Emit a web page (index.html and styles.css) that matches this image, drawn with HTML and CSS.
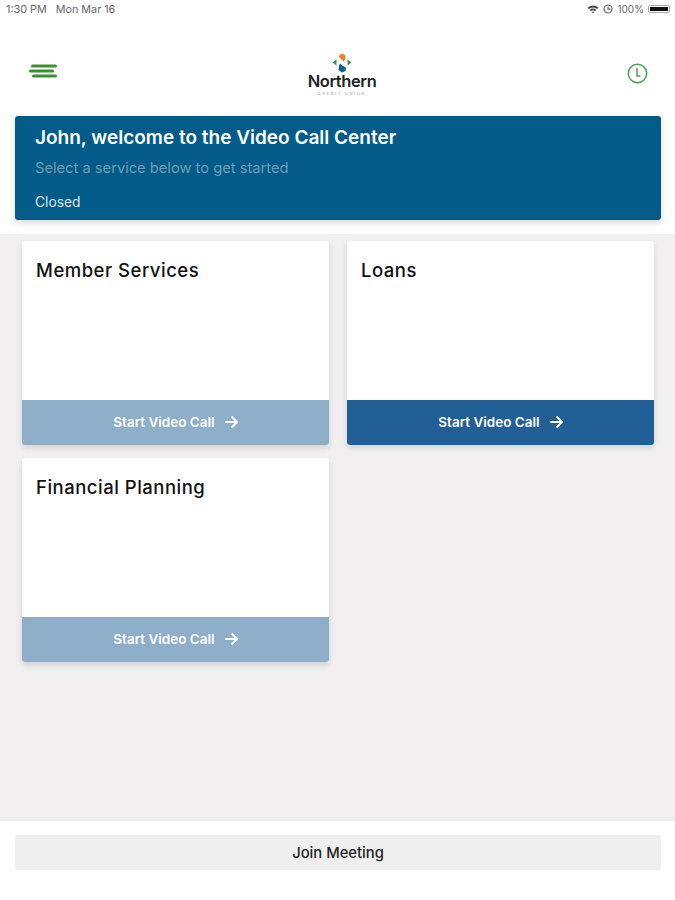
FILE: index.html
```html
<!DOCTYPE html>
<html lang="en">
<head>
    <meta charset="UTF-8">
    <meta name="viewport" content="width=device-width, initial-scale=1.0">
    <title>Video Call Center</title>
    <link rel="stylesheet" href="styles.css">
</head>
<body>
    <!-- Status bar -->
    <div class="status-bar">
        <div class="status-left">
            <span>1:30 PM</span>
            <span>Mon Mar 16</span>
        </div>
        <div class="status-right">
            <svg class="status-icon" width="12" height="9" viewBox="0 0 12 9">
                <path d="M0.5 2.8 A8 8 0 0 1 11.5 2.8 L10.2 4.1 A6.2 6.2 0 0 0 1.8 4.1 Z" fill="#444"/>
                <path d="M2.7 5 A4.6 4.6 0 0 1 9.3 5 L8.1 6.2 A3 3 0 0 0 3.9 6.2 Z" fill="#444"/>
                <path d="M4.8 7 A1.8 1.8 0 0 1 7.2 7 L6 8.6 Z" fill="#444"/>
            </svg>
            <svg class="status-icon" width="10" height="10" viewBox="0 0 10 10">
                <circle cx="5" cy="5" r="4" fill="none" stroke="#666" stroke-width="1.2"/>
                <path d="M5 2.6 V5.2 H7.4" fill="none" stroke="#666" stroke-width="1.2"/>
            </svg>
            <span>100%</span>
            <span class="battery"><span class="battery-fill"></span></span>
        </div>
    </div>

    <!-- Header with menu, logo and history -->
    <header class="top-header">
        <svg class="menu-icon" width="28" height="14" viewBox="0 0 28 14">
            <rect x="2" y="0.5" width="26" height="3" rx="1.5" fill="#3c8f33"/>
            <rect x="0" y="5.5" width="25" height="3" rx="1.5" fill="#3c8f33"/>
            <rect x="3" y="10.5" width="25" height="3" rx="1.5" fill="#3c8f33"/>
        </svg>
        <div class="logo">
            <svg width="20" height="20" viewBox="0 0 20 20">
                <path d="M6.5 3 L10 0.5 L13.5 2.5 L13.5 6 L11.5 8.5 L7.5 4.5 Z" fill="#ee7d31"/>
                <path d="M8 10.5 L11 13 L14 14.5 L13.5 18 L10 19.5 L6.5 17 L7 13 Z" fill="#0f5f8f"/>
                <path d="M0.5 9.5 L4.5 6.5 V12.5 Z" fill="#3c8f4a"/>
                <path d="M19.5 9.5 L15.5 6.5 V12.5 Z" fill="#3c8f4a"/>
            </svg>
            <div class="logo-name">Northern</div>
            <div class="logo-sub">CREDIT UNION</div>
        </div>
        <svg class="clock-icon" width="21" height="21" viewBox="0 0 21 21">
            <circle cx="10.5" cy="10.5" r="9.2" fill="none" stroke="#4c9a52" stroke-width="1.5"/>
            <path d="M10 5 V13 H13.5" fill="none" stroke="#4c9a52" stroke-width="1.5"/>
        </svg>
    </header>

    <!-- Welcome banner -->
    <section class="banner">
        <h1>John, welcome to the Video Call Center</h1>
        <p class="banner-sub">Select a service below to get started</p>
        <p class="banner-status">Closed</p>
    </section>

    <!-- Service cards -->
    <main class="services">
        <div class="card">
            <h2>Member Services</h2>
            <a class="call-btn disabled">Start Video Call
                <svg width="14" height="14" viewBox="0 0 14 14"><path d="M1 7 H12.5 M7.5 1.5 L13 7 L7.5 12.5" fill="none" stroke="#fff" stroke-width="2"/></svg>
            </a>
        </div>
        <div class="card">
            <h2>Loans</h2>
            <a class="call-btn">Start Video Call
                <svg width="14" height="14" viewBox="0 0 14 14"><path d="M1 7 H12.5 M7.5 1.5 L13 7 L7.5 12.5" fill="none" stroke="#fff" stroke-width="2"/></svg>
            </a>
        </div>
        <div class="card">
            <h2>Financial Planning</h2>
            <a class="call-btn disabled">Start Video Call
                <svg width="14" height="14" viewBox="0 0 14 14"><path d="M1 7 H12.5 M7.5 1.5 L13 7 L7.5 12.5" fill="none" stroke="#fff" stroke-width="2"/></svg>
            </a>
        </div>
    </main>

    <!-- Join meeting -->
    <footer class="bottom-bar">
        <button class="join-btn">Join Meeting</button>
    </footer>
</body>
</html>
```

FILE: styles.css
```css
* {
    box-sizing: border-box;
}

html, body {
    height: 100%;
}

body {
    margin: 0;
    display: flex;
    flex-direction: column;
    height: 900px;
    overflow: hidden;
    background-color: #fff;
    font-family: Inter, "Liberation Sans", sans-serif;
    color: #111;
}

/* Status bar */
.status-bar {
    display: flex;
    justify-content: space-between;
    align-items: center;
    height: 18px;
    padding: 0 5px 0 6px;
    font-size: 10.8px;
    color: #666;
}

.status-left {
    display: flex;
    gap: 9px;
}

.status-right {
    display: flex;
    align-items: center;
    gap: 4px;
}

.status-right span {
    font-size: 10px;
}

.battery {
    display: block;
    width: 22px;
    height: 8px;
    padding: 1px;
    border: 1px solid #aaa;
    border-radius: 2px;
}

.battery-fill {
    display: block;
    height: 100%;
    background-color: #111;
}

/* Header */
.top-header {
    display: flex;
    justify-content: space-between;
    align-items: center;
    height: 98px;
    padding: 8px 27px 0 29px;
}

.clock-icon {
    margin-top: 4px;
}

.logo {
    display: flex;
    flex-direction: column;
    align-items: center;
    margin-top: 7px;
}

.logo-name {
    font-size: 16.5px;
    font-weight: 600;
    line-height: 16px;
    letter-spacing: -0.4px;
    color: #222;
}

.logo-sub {
    margin-top: 2px;
    font-size: 4px;
    line-height: 5px;
    letter-spacing: 1.6px;
    color: #999;
}

/* Banner */
.banner {
    height: 104px;
    margin: 0 14px 14px 15px;
    padding: 11px 20px;
    border-radius: 3px;
    background-color: #025b88;
    box-shadow: 0 3px 6px rgba(0, 0, 0, 0.15);
    color: #fff;
}

.banner h1 {
    margin: 0;
    font-size: 19px;
    font-weight: 600;
    line-height: 22px;
}

.banner-sub {
    margin: 9px 0 0;
    font-size: 14.7px;
    line-height: 20px;
    color: #6f9db8;
}

.banner-status {
    margin: 15px 0 0;
    font-size: 13.8px;
    line-height: 18px;
    color: #dfe9ef;
}

/* Service cards */
.services {
    flex: 1;
    display: grid;
    grid-template-columns: 307px 307px;
    grid-auto-rows: 204px;
    column-gap: 18px;
    row-gap: 13px;
    align-content: start;
    padding: 7px 21px 0 22px;
    background-color: #f1eff0;
}

.card {
    display: flex;
    flex-direction: column;
    justify-content: space-between;
    border-radius: 3px;
    background-color: #fff;
    box-shadow: 0 3px 6px rgba(0, 0, 0, 0.12);
    overflow: hidden;
}

.card h2 {
    margin: 0;
    padding: 17px 14px 0;
    font-size: 18.5px;
    font-weight: 500;
    line-height: 24px;
    letter-spacing: 0.5px;
}

.call-btn {
    display: flex;
    justify-content: center;
    align-items: center;
    gap: 9px;
    height: 45px;
    padding-bottom: 2px;
    background-color: #215f96;
    font-size: 13.5px;
    font-weight: 600;
    color: #fff;
}

.call-btn.disabled {
    background-color: #8eaeca;
}

/* Join meeting */
.bottom-bar {
    height: 79px;
    padding: 14px 14px 0 15px;
}

.join-btn {
    display: block;
    width: 100%;
    height: 35px;
    border: none;
    border-radius: 2px;
    background-color: #efefef;
    font-family: inherit;
    font-size: 14.8px;
    font-weight: 500;
    color: #222;
}
```
